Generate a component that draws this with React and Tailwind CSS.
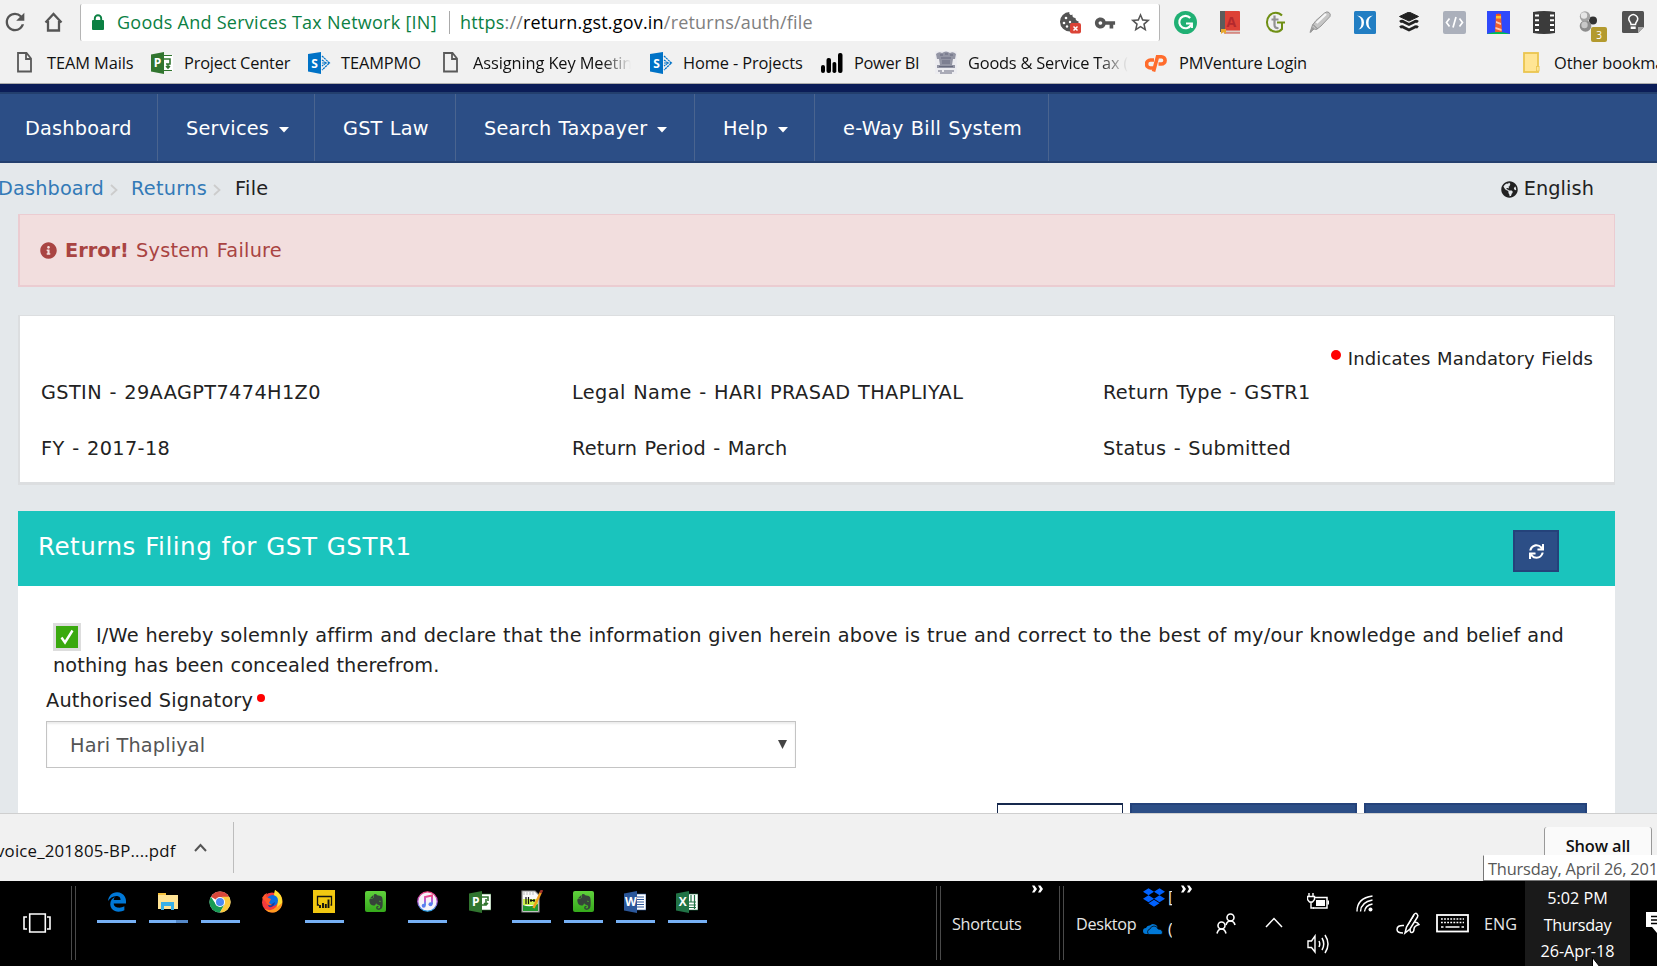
import React from "react";
import { FaInfoCircle, FaGlobeAmericas, FaEvernote, FaDropbox, FaSync, FaEdgeLegacy } from "react-icons/fa";
import { MdRefresh, MdVpnKey, MdStarBorder } from "react-icons/md";

const Svg = ({ w = 22, h = 22, vb, children, className = "" }) => (
  <svg width={w} height={h} viewBox={vb || `0 0 ${w} ${h}`} className={"shrink-0 " + className}>{children}</svg>
);

/* ---------- bookmark icons ---------- */
const PageIcon = () => (
  <Svg w={15} h={21}><path d="M1 1h8.5L14 6.5V19.500H1z M9 1v6h5" fill="none" stroke="#595959" strokeWidth="1.8" /></Svg>
);
const ProjectIcon = () => (
  <Svg w={22} h={22}>
    <path d="M12 3h10v16H12z" fill="#fff" />
    <path d="M13 3.500h8M13 18.500h8" stroke="#31752f" strokeWidth="1" />
    <path d="M13 7h6v5h-4M17 12v4M15 14l2 2 2-2" fill="none" stroke="#31752f" strokeWidth="1.600" />
    <path d="M0 2.500L13 0v22L0 19.500z" fill="#31752f" />
    <text x="2.800" y="15" fontSize="12" fontWeight="700" fill="#fff" fontFamily="Open Sans, sans-serif">P</text>
  </Svg>
);
const SharepointIcon = () => (
  <Svg w={23} h={22}>
    <path d="M14 4l7.500 7L14 18M14 8l4 3-4 3M14 11h7" fill="none" stroke="#0072c6" strokeWidth="1.200" strokeDasharray="2.200 0.6" />
    <path d="M0 2L13 0v22L0 19.500z" fill="#0072c6" />
    <text x="3.200" y="15.500" fontSize="12" fontWeight="700" fill="#fff" fontFamily="Open Sans, sans-serif">S</text>
  </Svg>
);
const PowerBars = () => (
  <Svg w={22} h={20}>
    <rect x="0" y="12" width="4" height="8" rx="2" /><rect x="5.500" y="5" width="4.500" height="15" rx="2" />
    <rect x="11.500" y="9" width="3.800" height="11" rx="1.800" /><rect x="17" y="0" width="4.500" height="20" rx="2" />
  </Svg>
);
const Emblem = () => (
  <Svg w={22} h={23}>
    <rect width="22" height="23" fill="#ececf0" />
    <path d="M1 3q3-3 6-1q4-3 8 0q3-2 6 1l-1 5h-2l-1 6h3v3H2v-3h3L4 8H2z" fill="#9395a4" />
    <path d="M5 4h3M10 3h3M15 4h3M6 7h10M7 10h8M7 12h8M4 15.500h14M3 20h4M9 20h10M5 22h12" stroke="#686b7e" strokeWidth="1.200" />
  </Svg>
);
const CpIcon = () => (
  <Svg w={22} h={18}><path d="M9 6H5.500a3.800 3.800 0 0 0 0 8H8" fill="none" stroke="#ff6c2c" strokeWidth="3.600" /><path d="M8.500 17.500L12.500 2.800h4a3.400 3.400 0 0 1 0 7.200H13.500" fill="none" stroke="#ff6c2c" strokeWidth="3.600" /></Svg>
);
const FolderIcon = () => (
  <Svg w={17} h={21}><rect x="1" y="1" width="14" height="19" fill="#ffe594" stroke="#eac54f" strokeWidth="1.800" /><rect x="13.500" y="14.500" width="2.600" height="4.500" fill="#ffe594" stroke="#eac54f" strokeWidth="0.800" /></Svg>
);

const Bookmark = ({ width, box, fade, icon, tracking, children }) => (
  <div className={"flex shrink-0 items-center " + width}>
    <div className={"flex shrink-0 items-center " + box}>{icon}</div>
    <span className={"whitespace-nowrap text-[16.4px] text-[#111] " + tracking + (fade ? " overflow-hidden [mask-image:linear-gradient(to_right,black_82%,transparent)]" : "")}>{children}</span>
  </div>
);

/* ---------- extension icons ---------- */
const Ext = ({ children }) => <div className="flex w-[44.8px] shrink-0 items-center justify-center">{children}</div>;

const Extensions = () => (
  <div className="flex h-full items-center">
    <Ext><Svg w={23} h={23}><circle cx="11.500" cy="11.500" r="11.500" fill="#20b074" /><path d="M16.200 7A6.200 6.200 0 1 0 17.200 13.500" fill="none" stroke="#fff" strokeWidth="2.100" /><path d="M12 12.500h6v4.500" fill="none" stroke="#fff" strokeWidth="1.900" /></Svg></Ext>
    <Ext><Svg w={20} h={23}><rect width="20" height="21" rx="1" fill="#dd4136" /><rect width="5" height="21" fill="#5c5c5c" /><path d="M1 19.500h19v2.500H1z" fill="#dccfca" /><path d="M4 22h16" stroke="#c8463c" /><path d="M1 18h5v5l-2.500-2L1 23z" fill="#e9a92d" /><text x="6.500" y="15.500" fontSize="14" fontWeight="700" fill="#b3282d" fontFamily="Open Sans, sans-serif">A</text></Svg></Ext>
    <Ext><Svg w={22} h={22}><path d="M18 4.500A8.800 9.600 0 1 0 18 18V11.500" fill="none" stroke="#6f8f14" strokeWidth="2" /><path d="M10.500 4.500v9.500q0 3.500 4 3M7.500 8.500H14.500" fill="none" stroke="#929292" strokeWidth="2.200" /><path d="M13 11.500h8" stroke="#6f8f14" strokeWidth="2" /></Svg></Ext>
    <Ext><Svg w={22} h={22}><path d="M3.500 14L7 9.500 15.500 2q2.500-2 4.500-.5t1 4L12 15l-4.500 3.500-2.500-.5-4 3.500z" fill="#c6c6c6" stroke="#8c8c8c" strokeWidth="0.900" /><path d="M7.500 12L17 3" stroke="#f7f7f7" strokeWidth="2.400" /><path d="M4 13.500l4.500 4.500" stroke="#808080" strokeWidth="1" /><path d="M1.500 21l3-4.500" stroke="#999" strokeWidth="1.500" /></Svg></Ext>
    <Ext><Svg w={22} h={23}><rect width="22" height="23" rx="1.500" fill="#227ec3" /><path d="M3 4.500q7 1 7 7T4.500 18.500q3-2 3-7T3 4.500zM19 4.500q-7 1-7 7t5.500 7q-3-2-3-7t4.500-7z" fill="#fff" /></Svg></Ext>
    <Ext><Svg w={20} h={21}><path d="M10 0l9.500 4.500L10 9 .5 4.500z" fill="#222" stroke="#222" strokeLinejoin="round" /><path d="M1 10q2-1.500 4 0l5 2.500 5-2.500q2-1.500 4 0M1 15.500q2-1.500 4 0l5 2.500 5-2.500q2-1.500 4 0" fill="none" stroke="#222" strokeWidth="2.800" /></Svg></Ext>
    <Ext><Svg w={23} h={23}><rect width="23" height="23" rx="2" fill="#abb0bb" /><path d="M6.500 7.500L3.500 11.500l3 4M16.500 7.500l3 4-3 4M13 6l-3 10.500" fill="none" stroke="#fff" strokeWidth="1.700" /></Svg></Ext>
    <Ext><Svg w={23} h={23}><rect width="23" height="23" fill="#2f49fb" /><path d="M9 3h5l1 18H8z" fill="#f0602c" /><path d="M9 5h5v2.500H9z" fill="#ffc52d" /><path d="M9 10l5 2v2L9 12zM8.500 16l6 2v2l-6-2z" fill="#ffc8b0" /><path d="M9 4q2.500-3 5 0z" fill="#f0481c" /><path d="M0 23q11-4 23 0z" fill="#00c04b" /></Svg></Ext>
    <Ext><Svg w={22} h={23}><path d="M0 1q11-2 22 0v21q-11 2-22 0z" fill="#3b3b3b" /><path d="M4 3.500v17M19 3.500v17" stroke="#fff" strokeWidth="4" strokeDasharray="2 2.800" /></Svg></Ext>
    <div className="relative flex w-[47px] shrink-0 items-center pl-[13px]">
      <Svg w={18} h={22}><circle cx="14" cy="9.500" r="4" fill="#333" /><circle cx="6.500" cy="15" r="5.800" fill="#8c8c8c" /><circle cx="6" cy="5.500" r="5.200" fill="#a4a4a4" /><circle cx="5" cy="4.500" r="3.200" fill="#e6e6e6" /><circle cx="5.500" cy="14" r="3.200" fill="#c8c8c8" /></Svg>
      <span className="absolute left-[25px] top-[16px] flex h-[15px] w-[16px] items-center justify-center rounded-[2px] bg-[#b39a2e] text-[10px] leading-none text-white">3</span>
    </div>
    <div className="flex w-[40px] shrink-0 items-center justify-center"><Svg w={22} h={23}><path d="M1.500 0H20.500q1.500 0 1.500 1.500V16l-6 6H1.500Q0 22 0 20.500V1.500Q0 0 1.500 0z" fill="#525252" /><path d="M22 16h-6v6z" fill="#aaa" /><path d="M9 13.500q0-1.500-1.200-3a4.300 4.300 0 1 1 6.900 0q-1.200 1.500-1.200 3z" fill="none" stroke="#fff" strokeWidth="1.500" /><path d="M8.700 15.500h5v2.500h-5z" fill="#fff" /></Svg></div>
  </div>
);

const BrowserChrome = () => (
  <div className="flex h-[84px] shrink-0 flex-col border-b border-[#adadad] bg-[#f1f1f1] font-['Open_Sans',sans-serif]">
    <div className="flex h-[43px] shrink-0 items-center">
      <div className="flex w-[80px] shrink-0 items-center pl-[1px]">
        <MdRefresh className="h-[28px] w-[28px] shrink-0 text-[#555]" />
        <Svg w={19} h={20} className="ml-[15px]"><path d="M1.500 10.500L9.500 2l8 8.500M4 9v9.500h11V9" fill="none" stroke="#555" strokeWidth="2.300" /></Svg>
      </div>
      <div className="mt-[2px] flex h-[37px] w-[1080px] shrink-0 items-center rounded-[2px] border-x border-[#b5b5b5] bg-white text-[18px]">
        <div className="w-[36px] shrink-0 pl-[11px]"><Svg w={12} h={17}><rect y="6" width="12" height="10" rx="1" fill="#0b8043" /><path d="M2.800 7V4.500a3.200 3.200 0 0 1 6.400 0V7" fill="none" stroke="#0b8043" strokeWidth="1.900" /></Svg></div>
        <span className="w-[332px] shrink-0 whitespace-nowrap tracking-[0.26px] text-[#0b8043]">Goods And Services Tax Network [IN]</span>
        <div className="h-[23px] w-px bg-[#aaa]" />
        <span className="ml-[10px] w-[600px] shrink-0 whitespace-nowrap tracking-[0.2px] text-[#808080]"><span className="text-[#0b8043]">https</span>://<span className="text-black">return.gst.gov.in</span>/returns/auth/file</span>
        <div className="flex items-center">
          <Svg w={21} h={22}><path d="M9.500 0a2 2 0 0 0 3 2.500Q12 6 15.500 6q0 3 3 3.200V11L10 19.500A9.700 9.700 0 0 1 9.500 0z" fill="#545454" /><circle cx="6" cy="6" r="1.300" fill="#fff" /><circle cx="4" cy="11" r="1.300" fill="#fff" /><circle cx="10" cy="10" r="1.200" fill="#fff" /><circle cx="7" cy="14.500" r="1.200" fill="#fff" /><rect x="10" y="11" width="11" height="10.500" rx="2" fill="#db4437" /><path d="M13.500 14.500l4 4M17.500 14.500l-4 4" stroke="#fff" strokeWidth="1.500" /></Svg>
          <MdVpnKey className="ml-[13px] h-[22px] w-[22px] text-[#555]" />
          <MdStarBorder className="ml-[13px] h-[23px] w-[23px] text-[#555]" />
        </div>
      </div>
      <div className="mt-[1px] h-full pl-[3px]"><Extensions /></div>
    </div>
    <div className="flex h-[40px] items-center pl-[17px]">
      <Bookmark width="w-[134px]" box="w-[30px]" tracking="tracking-[-0.1px]" icon={<PageIcon />}>TEAM Mails</Bookmark>
      <Bookmark width="w-[157px]" box="w-[33px]" tracking="tracking-[-0.2px]" icon={<ProjectIcon />}>Project Center</Bookmark>
      <Bookmark width="w-[135px]" box="w-[33px]" tracking="tracking-[-0.1px]" icon={<SharepointIcon />}>TEAMPMO</Bookmark>
      <Bookmark width="w-[188px] mr-[19px]" box="w-[30px]" tracking="tracking-[-0.1px]" fade icon={<PageIcon />}>Assigning Key Meetin</Bookmark>
      <Bookmark width="w-[171px]" box="w-[33px]" tracking="tracking-[-0.12px]" icon={<SharepointIcon />}>Home - Projects</Bookmark>
      <Bookmark width="w-[114px]" box="w-[33px]" tracking="tracking-[-0.3px]" icon={<PowerBars />}>Power BI</Bookmark>
      <Bookmark width="w-[196px] mr-[14px]" box="w-[33px]" tracking="tracking-[-0.2px]" fade icon={<Emblem />}>Goods &amp; Service Tax (</Bookmark>
      <Bookmark width="w-[378px]" box="w-[34px]" tracking="tracking-[-0.22px]" icon={<CpIcon />}>PMVenture Login</Bookmark>
      <Bookmark width="w-[160px]" box="w-[31px]" tracking="tracking-[-0.1px]" icon={<FolderIcon />}>Other bookmarks</Bookmark>
    </div>
  </div>
);

/* ---------- GST site ---------- */
const NavItem = ({ className, caret, children }) => (
  <div className={"flex h-full shrink-0 items-center border-r border-[#4a648f] pt-[3px] whitespace-nowrap " + className}>
    {children}
    {caret && <Svg w={10} h={6} className="ml-[10px] mt-[2px]"><path d="M0 0h10L5 5.500z" fill="#fff" /></Svg>}
  </div>
);

const Nav = () => (
  <div className="shrink-0 border-t-[8px] border-[#0b1d58]">
    <div className="flex h-[71px] border-y-2 border-[#233f6e] bg-[#2c4e86] text-[19.3px] tracking-[0.22px] [word-spacing:0.7px] text-white">
      <NavItem className="w-[158px] pl-[25px]">Dashboard</NavItem>
      <NavItem className="w-[157px] pl-[28px]" caret>Services</NavItem>
      <NavItem className="w-[141px] pl-[28px]">GST Law</NavItem>
      <NavItem className="w-[239px] pl-[28px]" caret>Search Taxpayer</NavItem>
      <NavItem className="w-[120px] pl-[28px]" caret>Help</NavItem>
      <NavItem className="w-[234px] pl-[28px] tracking-[0.3px]">e-Way Bill System</NavItem>
    </div>
  </div>
);

const Chevron = () => <Svg w={8} h={12} className="mt-px"><path d="M1 1l5.500 5L1 11" fill="none" stroke="#ccc" strokeWidth="1.800" /></Svg>;

const Breadcrumb = () => (
  <div className="flex h-[51px] shrink-0 items-center pt-[2px] text-[19.3px] text-[#222]">
    <span className="-ml-[2px] w-[112px] shrink-0 tracking-[0.15px] text-[#337ab7]">Dashboard</span>
    <Chevron />
    <span className="ml-[13px] w-[82px] shrink-0 tracking-[0.3px] text-[#337ab7]">Returns</span>
    <Chevron />
    <span className="ml-[14px] tracking-[0.3px]">File</span>
    <FaGlobeAmericas className="ml-auto h-[17px] w-[17px]" />
    <span className="ml-[6px] mr-[63px] tracking-[0.1px]">English</span>
  </div>
);

const details = [
  [["GSTIN - 29AAGPT7474H1Z0", "tracking-[0.38px]"], ["Legal Name - HARI PRASAD THAPLIYAL", "tracking-[0.4px]"], ["Return Type - GSTR1", "tracking-[0.34px]"]],
  [["FY - 2017-18", "tracking-[0.38px]"], ["Return Period - March", "tracking-[0.2px]"], ["Status - Submitted", "tracking-[0.3px]"]],
];

const Site = () => (
  <div className="flex h-[729px] shrink-0 flex-col overflow-hidden bg-[#e4e8eb] font-['DejaVu_Sans',sans-serif] text-[19.3px] text-[#222]">
    <Nav />
    <Breadcrumb />
    <div className="ml-[18px] flex h-[73px] w-[1597px] shrink-0 items-center border border-b-2 border-l-2 border-[#ebccd1] bg-[#f2dede] pl-[20px] text-[#a94442]">
      <FaInfoCircle className="mt-px h-[17px] w-[17px]" />
      <b className="ml-[8px] mt-[3px] w-[71px]">Error!</b>
      <span className="mt-[3px] tracking-[0.25px] [word-spacing:1px]">System Failure</span>
    </div>
    <div className="ml-[18px] mt-[28px] flex h-[170px] w-[1597px] shrink-0 flex-col border border-b-[3px] border-l-2 border-[#dcdee0] bg-white px-[21px] pt-[30px]">
      <div className="flex h-[24px] items-center justify-end text-[18px] tracking-[0.12px] [word-spacing:0.8px]">
        <span className="mb-[7px] mr-[7px] h-[10px] w-[10px] rounded-full bg-[#f00]" />
        Indicates Mandatory Fields
      </div>
      {details.map((row, i) => (
        <div key={i} className="grid h-[56px] grid-cols-[531px_531px_1fr] whitespace-nowrap pt-[9px] [word-spacing:1px]">
          {row.map(([t, tracking]) => <span key={t} className={tracking}>{t}</span>)}
        </div>
      ))}
    </div>
    <div className="ml-[18px] mt-[26px] flex h-[75px] w-[1597px] shrink-0 justify-between bg-[#1ac4bd] pl-[20px] pr-[56px] text-white">
      <span className="mt-[21px] text-[24.6px] leading-[30px] tracking-[0.5px] [word-spacing:1px]">Returns Filing for GST GSTR1</span>
      <button className="mt-[19px] flex h-[42px] w-[46px] items-center justify-center border-2 border-[#24427a] bg-[#2c4e86]"><FaSync className="h-[15px] w-[15px]" /></button>
    </div>
    <div className="ml-[18px] flex w-[1597px] grow flex-col bg-white">
      <div className="ml-[35px] mt-[34px] flex h-[30px] items-center">
        <span className="mt-[4px] flex h-[28px] w-[28px] shrink-0 items-center justify-center border-[3px] border-[#ddd] bg-[#3aa90e]">
          <Svg w={14} h={16}><path d="M1.500 8.500L5 13.500 12.500 1.500" fill="none" stroke="#fff" strokeWidth="2.400" /></Svg>
        </span>
        <span className="ml-[15px] mt-[2px] w-[1468px] whitespace-nowrap tracking-[0.18px] [text-align-last:justify]">I/We hereby solemnly affirm and declare that the information given herein above is true and correct to the best of my/our knowledge and belief and</span>
      </div>
      <div className="ml-[35px] h-[30px] leading-[32px] tracking-[0.1px] [word-spacing:0.5px]">nothing has been concealed therefrom.</div>
      <div className="ml-[28px] mt-[4px] flex h-[34px] items-center">
        <span className="w-[211px] tracking-[0.2px] mt-px">Authorised Signatory</span>
        <span className="mb-[7px] h-[8px] w-[8px] rounded-full bg-[#f00]" />
      </div>
      <div className="ml-[28px] mt-[3px] flex h-[47px] w-[750px] items-center justify-between border border-[#c4c4c4] pl-[23px] pr-[8px] text-[#555] shadow-[inset_0_2px_2px_rgba(0,0,0,0.075)]">
        <span className="mt-[3px] tracking-[0.15px]">Hari Thapliyal</span>
        <Svg w={9} h={9}><path d="M0 0h9L4.500 9z" fill="#444" /></Svg>
      </div>
      <div className="ml-[979px] mt-[35px] flex h-[40px] shrink-0 gap-[7px]">
        <div className="w-[126px] border border-t-2 border-[#17294d] bg-white" />
        <div className="w-[227px] border-2 border-[#24427a] bg-[#2c4e86]" />
        <div className="w-[223px] border-2 border-[#24427a] bg-[#2c4e86]" />
      </div>
    </div>
  </div>
);

/* ---------- download shelf ---------- */
const Shelf = () => (
  <div className="relative flex h-[68px] shrink-0 items-start border-t border-[#cfcfcf] bg-[#f1f1f1] font-['Open_Sans',sans-serif] text-[16.4px] text-[#111]">
    <div className="mt-[8px] flex h-[51px] w-[234px] shrink-0 items-center border-r border-[#bdbdbd]">
      <span className="-ml-[4px] mt-[7px] w-[198px] whitespace-nowrap text-[16.800px] tracking-[0.2px]">voice_201805-BP....pdf</span>
      <Svg w={13} h={9}><path d="M1 8l5.500-6L12 8" fill="none" stroke="#555" strokeWidth="2" /></Svg>
    </div>
    <div className="ml-auto mr-[5px] mt-[13px] flex h-[40px] w-[108px] justify-center rounded-t-[3px] border-x border-[#999] bg-[#fafafa] pt-[7px] font-semibold leading-[24px] tracking-[-0.15px]">Show all</div>
    <div className="absolute left-[1483px] top-[41px] h-[26px] w-[190px] overflow-hidden whitespace-nowrap border border-[#767676] border-t-white bg-white pl-[4px] leading-[25px] tracking-[-0.2px] text-[#575757]">Thursday, April 26, 2018</div>
  </div>
);

/* ---------- taskbar ---------- */
const Office = ({ color, letter, children }) => (
  <Svg w={22} h={22}><rect x="11" y="3" width="11" height="16" fill="#fff" stroke={color} strokeWidth="0.6" />{children}<path d="M0 2.500L13 0v22L0 19.500z" fill={color} /><text x="6.800" y="15" textAnchor="middle" fontSize="12" fontWeight="700" fill="#fff" fontFamily="Open Sans, sans-serif">{letter}</text></Svg>
);
const Evernote = () => <div className="flex h-[21px] w-[21px] items-center justify-center rounded-[2px] bg-gradient-to-b from-[#5fd13c] to-[#35a91b]"><FaEvernote className="h-[18px] w-[18px] text-[#36443a]" /></div>;
const Chrome = () => (
  <Svg w={22} h={22}>
    <circle cx="11" cy="11" r="10.500" fill="#fff" />
    <path d="M11 11L1.900 5.750A10.500 10.500 0 0 1 20.100 5.750z" fill="#d8483b" /><path d="M1.900 5.750A10.500 10.500 0 0 0 11 21.500L15.500 13.500 11 11 7 13.500z" fill="#179c55" /><path d="M20.100 5.750A10.500 10.500 0 0 1 11 21.500L15.500 13.500 13 5.750z" fill="#fdcb3d" />
    <circle cx="11" cy="11" r="5" fill="#fff" /><circle cx="11" cy="11" r="4" fill="#4a8af4" />
  </Svg>
);
const Firefox = () => (
  <Svg w={22} h={23}>
    <circle cx="11" cy="12.500" r="10" fill="#f53a3c" />
    <path d="M14 0q7 4 7.500 11T15 22Q8 24 4 19q7 3 11-2t-2-11z" fill="#ff9a1f" />
    <path d="M14 0q8 5 7 13l-5 4q2-7-3-12z" fill="#ffe135" />
    <circle cx="11.500" cy="10.500" r="5.500" fill="#0a6fe0" /><path d="M6 13q3 3 5 1l3-2q-1 6-6 5z" fill="#1d3a9c" /><path d="M1 8q2-4 5-5l-1 4 5 2-2 4 3 2q-5 1-6-3z" fill="#ff5a2c" />
  </Svg>
);
const apps = [
  { on: true, icon: <FaEdgeLegacy className="h-[20px] w-[20px] text-[#0078d7]" /> },
  { on: true, split: true, icon: <Svg w={21} h={18}><path d="M0 0h8v2h12v14H0z" fill="#ffe394" /><path d="M0 0h8v2H0z" fill="#f5c13c" /><path d="M3 9h13v8h-3v-4H6v4H3z" fill="#38b0e8" /></Svg> },
  { on: true, icon: <Chrome /> },
  { icon: <Firefox /> },
  { on: true, icon: <Svg w={22} h={23}><rect width="22" height="23" fill="#f2c811" /><path d="M6 15H4.500V6.500h14V15H17.500" fill="none" stroke="#111" strokeWidth="1.300" /><path d="M7 18v-3M10 18v-5M12.800 18v-4M15.500 18V9.500" stroke="#111" strokeWidth="1.900" /></Svg> },
  { icon: <Evernote /> },
  { on: true, icon: <Svg w={21} h={21}><defs><linearGradient id="note" x1="0" y1="0" x2="0" y2="1"><stop offset="0" stopColor="#f0467c" /><stop offset="0.5" stopColor="#b454d8" /><stop offset="1" stopColor="#29a9f0" /></linearGradient></defs><circle cx="10.500" cy="10.500" r="9.700" fill="#f4f2f7" stroke="url(#note)" strokeWidth="1.200" /><path d="M8 14.500V6l7-1.500V13" fill="none" stroke="url(#note)" strokeWidth="1.900" /><circle cx="6.700" cy="14.700" r="2" fill="#5a7df0" /><circle cx="13.500" cy="13.300" r="2" fill="#5a7df0" /></Svg> },
  { icon: <Office color="#31752f" letter="P"><path d="M13 6h6v4M17 8v6h-4M17 14l-2-2M17 14l2-2" fill="none" stroke="#31752f" strokeWidth="1.600" /></Office> },
  { on: true, icon: <Svg w={22} h={23}><path d="M1 1h13l4 4v17H1z" fill="#fafafa" stroke="#888" strokeWidth="1.200" /><path d="M2 9h15v6H2z" fill="#cdf24a" /><path d="M2 15q7 3 15-1v7H2z" fill="#23992e" /><path d="M3 2v3M6 2v3M9 2v3M12 2v3" stroke="#bbb" /><path d="M5 7v7M7.500 7v7M9 10.500h5M10 9v3M13 9v3" stroke="#111" strokeWidth="1.200" /><path d="M20 2l-7.500 16" stroke="#f0a01e" strokeWidth="2.400" /><path d="M21 0l-1.500 3" stroke="#a3342a" strokeWidth="2.600" /></Svg> },
  { on: true, icon: <Evernote /> },
  { on: true, icon: <Office color="#2b579a" letter="W"><path d="M13 6h7M13 8.500h7M13 11h7M13 13.500h7M13 16h7" stroke="#2b579a" strokeWidth="1.200" /></Office> },
  { on: true, icon: <Office color="#217346" letter="X"><path d="M13 11h7M13 14h7M13 16.500h7M18.500 4v14M15 4v7" stroke="#217346" strokeWidth="1.200" /></Office> },
];

const Rails = ({ className }) => <div className={"h-[74px] w-[5px] shrink-0 border-x border-[#4a4a4a] " + className} />;
const More = ({ className = "" }) => <Svg w={11} h={8} className={className}><path d="M0 .5h2.500L5 4 2.500 7.500H0L2 4zM6 .5h2.500L11 4 8.500 7.500H6L8 4z" fill="#fff" /></Svg>;

const Taskbar = () => (
  <div className="relative flex h-[85px] shrink-0 overflow-hidden bg-black font-['Open_Sans',sans-serif] text-[16.2px] text-[#e6e6e6]">
    <div className="flex w-[71px] shrink-0 justify-start pl-[23px] pt-[32px]">
      <Svg w={28} h={20}><path d="M6.700 1h15.600v18H6.700zM4 4H1v12h3M24 4h3v12h-3" fill="none" stroke="#fff" strokeWidth="1.600" /></Svg>
    </div>
    <Rails className="mt-[5px]" />
    <div className="ml-[21px] flex w-[839px] shrink-0 gap-[12.900px] pt-[8px]">
      {apps.map((a, i) => (
        <div key={i} className="flex w-[39px] shrink-0 flex-col items-center">
          <div className="flex h-[25px] items-center">{a.icon}</div>
          {a.on && <div className={"mt-[6px] h-[3px] w-full " + (a.split ? "border-r-[12px] border-[#5488c8] bg-[#76b0f5]" : "bg-[#76b0f5]")} />}
        </div>
      ))}
    </div>
    <Rails className="mt-[5px]" />
    <span className="ml-[11px] mt-[31px] w-[80px] shrink-0 leading-[24px] tracking-[-0.3px]">Shortcuts</span>
    <More className="mt-[4px]" />
    <Rails className="ml-[16px] mt-[5px]" />
    <span className="ml-[12px] mt-[31px] w-[67px] shrink-0 leading-[24px] tracking-[-0.3px]">Desktop</span>
    <div className="flex w-[29px] shrink-0 flex-col overflow-hidden pt-[5px]">
      <div className="flex h-[22px] items-center"><FaDropbox className="h-[23px] w-[22px] shrink-0 text-[#0061fe]" /><span className="ml-[3px] leading-none">[</span></div>
      <div className="mt-[10px] flex h-[22px] items-center"><Svg w={20} h={12}><path d="M5 11H3a3 3 0 0 1 0-6q1-3 4-2.500Q9 0 12 1.500q2 .5 2.500 2.500" fill="#0078d7" /><path d="M6 11.500a3 3 0 0 1 1-5.500q1-3 4-3 3 0 4 3 4 0 4.500 3 .3 2-1.500 2.500z" fill="#0078d7" stroke="#000" strokeWidth="0.700" /></Svg><span className="ml-[5px] leading-none">(</span></div>
    </div>
    <More className="ml-[9px] mt-[4px]" />
    <Svg w={20} h={21} className="ml-[24px] mt-[32px]"><g fill="none" stroke="#fff" strokeWidth="1.600"><circle cx="14.500" cy="4.500" r="3.500" /><path d="M10 12q1-4 4.500-4t4.500 4" /><circle cx="5.500" cy="12.500" r="3.500" /><path d="M1 20.500Q2 16 5.500 16t4.500 4.500" /></g></Svg>
    <Svg w={18} h={11} className="ml-[29px] mt-[36px]"><path d="M1 10L9 1.500 17 10" fill="none" stroke="#fff" strokeWidth="1.500" /></Svg>
    <div className="ml-[24px] flex w-[49px] shrink-0 flex-col pt-[12px]">
      <Svg w={22} h={17}><path d="M8 4.500h12V15H6" fill="none" stroke="#fff" strokeWidth="1.500" /><path d="M9 7h9v6H9zM20.500 7.500h1.500v4h-1.500z" fill="#fff" /><path d="M2 0v3M6 0v3M.5 3.500h7v3L5.500 9h-3L.5 6.500zM4 9v6h3" fill="none" stroke="#fff" strokeWidth="1.400" /></Svg>
      <Svg w={23} h={20} className="mt-[24px]"><path d="M1 7h3.500L8 2v16L4.500 13.500H1z" fill="none" stroke="#fff" strokeWidth="1.400" /><path d="M12 7q1.500 3 0 6M15 4q3.500 6 0 12M18 1q6 9 0 18" fill="none" stroke="#fff" strokeWidth="1.500" /></Svg>
    </div>
    <Svg w={17} h={17} className="mt-[14px]"><g fill="none" stroke="#fff" strokeWidth="1.400"><path d="M1 16.500Q1 3 16.500 1" /><path d="M4.500 16.500Q5 7 16.500 5" /><path d="M8.500 16.500Q9 10.500 16.500 9" /></g><circle cx="14.500" cy="14.500" r="2" fill="#fff" /></Svg>
    <Svg w={24} h={23} className="ml-[23px] mt-[31px]"><g fill="none" stroke="#fff" strokeWidth="1.500"><path d="M8 13.500Q1 13 1 17.500q0 3.500 6 3.500" /><path d="M9 21l1.500-6L18 2.500q1.500-2 3-.5t.5 3L14 17z" /><path d="M12 13L18 3.500" strokeWidth="1" /><path d="M14 17q0 4 2 3.500t2-3.500 5-4.500q-1-2-4-2.500" /></g></Svg>
    <Svg w={33} h={19} className="ml-[16px] mt-[33px]"><rect x="1" y="1" width="31" height="16.500" fill="none" stroke="#fff" strokeWidth="1.800" /><path d="M5 5h23M5 8.500h23" stroke="#fff" strokeWidth="1.500" strokeDasharray="1.800 1.300" /><path d="M5 13h2.500M9.500 13h14M25.500 13H28" stroke="#fff" strokeWidth="1.500" /></Svg>
    <span className="ml-[15px] mt-[31px] w-[41px] shrink-0 leading-[24px]">ENG</span>
    <div className="flex w-[105px] shrink-0 flex-col items-center bg-[#1a1a1a] pt-[4px] text-[16.200px] leading-[26.500px] text-white">
      <span>5:02 PM</span><span className="tracking-[-0.3px]">Thursday</span><span>26-Apr-18</span>
    </div>
    <Svg w={20} h={22} className="ml-[16px] mt-[31px]"><path d="M0 0h20v15h-9v6l-5-6H0z" fill="#fff" /><path d="M5 4.500h15M5 8h15M5 11.500h15" stroke="#000" strokeWidth="1.500" /></Svg>
    <Svg w={14} h={20} className="absolute left-[1592px] top-[76px]"><path d="M.5.500v18l4-4h7z" fill="#fff" stroke="#000" /></Svg>
  </div>
);

export default function App() {
  return (
    <div className="h-[970px] w-[1662px] overflow-hidden bg-white">
      <div className="flex h-[966px] w-[1657px] flex-col overflow-hidden">
        <BrowserChrome />
        <Site />
        <Shelf />
        <Taskbar />
      </div>
    </div>
  );
}
